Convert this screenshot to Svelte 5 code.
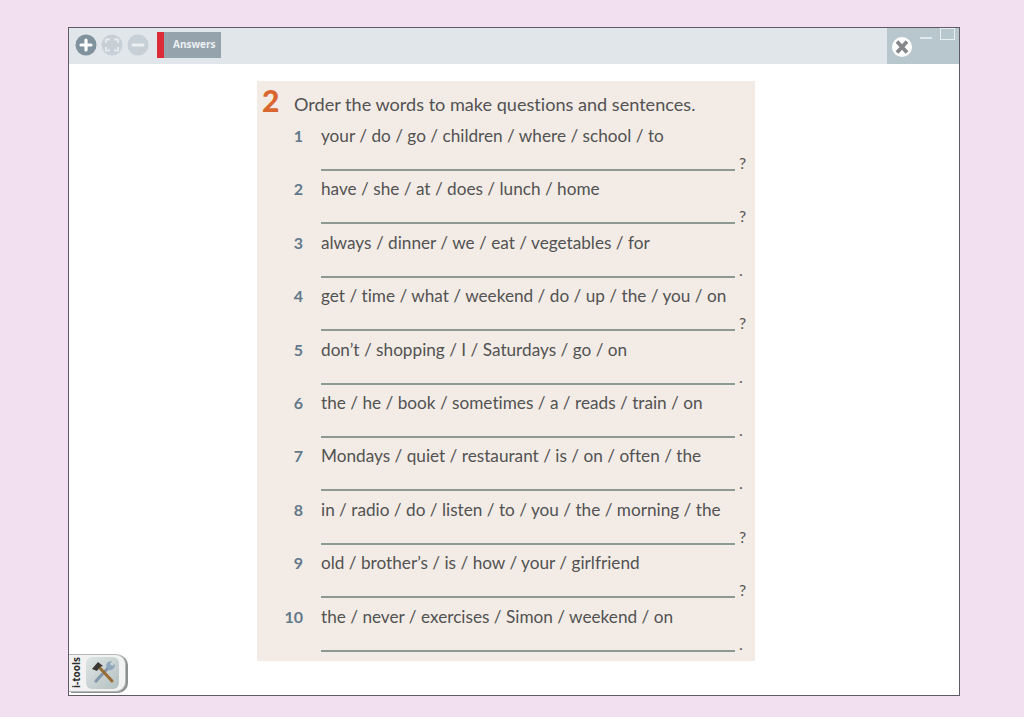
<script>
  const items = [
    { text: 'your / do / go / children / where / school / to', end: '?' },
    { text: 'have / she / at / does / lunch / home', end: '?' },
    { text: 'always / dinner / we / eat / vegetables / for', end: '.' },
    { text: 'get / time / what / weekend / do / up / the / you / on', end: '?' },
    { text: 'don’t / shopping / I / Saturdays / go / on', end: '.' },
    { text: 'the / he / book / sometimes / a / reads / train / on', end: '.' },
    { text: 'Mondays / quiet / restaurant / is / on / often / the', end: '.' },
    { text: 'in / radio / do / listen / to / you / the / morning / the', end: '?' },
    { text: 'old / brother’s / is / how / your / girlfriend', end: '?' },
    { text: 'the / never / exercises / Simon / weekend / on', end: '.' }
  ]
</script>

<div class="page">
  <div class="window">
    <div class="toolbar">
      <div class="tools">
        <svg viewBox="0 0 22 22" width="22" height="22">
          <circle cx="11" cy="11" r="10.5" fill="#7f929e" />
          <path d="M11 6v10M6 11h10" stroke="#fff" stroke-width="3.2" stroke-linecap="round" />
        </svg>
        <svg viewBox="0 0 22 22" width="22" height="22">
          <circle cx="11" cy="11" r="10.5" fill="#c6d0d6" />
          <path d="M5 9V5.500h4M13 5.500h4V9M17 13v3.500h-4M9 16.500H5V13" fill="none" stroke="#e6eaed" stroke-width="1.800" />
        </svg>
        <svg viewBox="0 0 22 22" width="22" height="22">
          <circle cx="11" cy="11" r="10.5" fill="#c6d0d6" />
          <path d="M6 11h10" stroke="#eef1f3" stroke-width="3" stroke-linecap="round" />
        </svg>
        <div class="answers">Answers</div>
      </div>
      <div class="controls">
        <svg class="close" viewBox="0 0 20 20" width="20" height="20">
          <circle cx="10" cy="10" r="10" fill="#fff" />
          <path d="M5 4.500l10 11M15 4.500l-10 11" stroke="#85888b" stroke-width="3.800" />
        </svg>
        <div class="minimize"></div>
        <div class="maximize"></div>
      </div>
    </div>

    <div class="content">
      <div class="card">
        <div class="heading">
          <span class="number">2</span>
          <span class="title">Order the words to make questions and sentences.</span>
        </div>
        <ol>
          {#each items as item, i}
            <li>
              <span class="idx">{i + 1}</span>
              <span class="text">{item.text}</span>
              <span class="line"></span>
              <span class="end">{item.end}</span>
            </li>
          {/each}
        </ol>
      </div>
    </div>

    <div class="itools">
      <span class="label">i-tools</span>
      <div class="tile">
        <svg viewBox="0 0 28 28" width="28" height="28">
          <path d="M20 8L7 22" stroke="#8398ab" stroke-width="3.200" stroke-linecap="round" />
          <path d="M18 9c-2-3 0-7 5-7l-2 3 2 2 3-2c0 5-4 7-7 6z" fill="#90a6ba" />
          <path d="M9 7l14 15" stroke="#9a6a34" stroke-width="3" stroke-linecap="round" />
          <path d="M3 10l6-7 5 4-3 1-3 4z" fill="#3b3733" />
        </svg>
      </div>
    </div>
  </div>
</div>

<style>
  :global(body) {
    margin: 0;
    background: #f2dff0;
  }

  .page {
    height: 717px;
    box-sizing: border-box;
    padding: 27px 64px 21px 68px;
    font-family: Lato, "Open Sans", sans-serif;
  }

  .window {
    position: relative;
    height: 100%;
    box-sizing: border-box;
    background: #fff;
    border: 1px solid #5f5a66;
    display: flex;
    flex-direction: column;
  }

  .toolbar {
    height: 36px;
    flex: none;
    background: #e1e6ea;
    display: flex;
    justify-content: space-between;
  }

  .tools {
    display: flex;
    align-items: center;
    gap: 4px;
    padding: 0 0 2px 6px;
  }

  .answers {
    margin-left: 4px;
    width: 48px;
    height: 26px;
    padding-left: 9px;
    background: #95a3ad;
    border-left: 7px solid #dc2b38;
    color: #eef1f3;
    font-family: "Open Sans", sans-serif;
    font-size: 10px;
    font-weight: 700;
    line-height: 25px;
  }

  .controls {
    position: relative;
    width: 72px;
    background: #b8c7ce;
  }

  .close {
    position: absolute;
    left: 5px;
    top: 9px;
  }

  .minimize {
    position: absolute;
    left: 33px;
    top: 9px;
    width: 12px;
    height: 2px;
    background: #dfe8ec;
  }

  .maximize {
    position: absolute;
    left: 53px;
    top: 0;
    width: 13px;
    height: 10px;
    border: 1px solid #e8eff2;
  }

  .content {
    flex: 1;
    padding: 17px 0 0 188px;
  }

  .card {
    width: 498px;
    height: 580px;
    box-sizing: border-box;
    background: #f3ece6;
    padding: 5px 0 0 5px;
    color: #525252;
  }

  .heading {
    display: flex;
    align-items: center;
    height: 35px;
    margin-bottom: 2px;
  }

  .number {
    width: 32px;
    color: #d9662f;
    font-size: 30px;
    font-weight: 900;
    line-height: 30px;
    margin-top: -7px;
  }

  .title {
    font-size: 18.100px;
    white-space: nowrap;
    font-variant-ligatures: none;
  }

  ol {
    list-style: none;
    margin: 0;
    padding: 0;
  }

  li {
    display: grid;
    grid-template-columns: 59px 414px 1fr;
    grid-template-rows: 26px 27.400px;
    font-size: 17.200px;
  }

  .idx {
    padding-right: 18px;
    text-align: right;
    color: #63798a;
    font-weight: 700;
    font-size: 16px;
    line-height: 26px;
  }

  .text {
    grid-column: 2 / 4;
    line-height: 26px;
    white-space: nowrap;
    font-variant-ligatures: none;
  }

  .line {
    grid-column: 2;
    height: 2px;
    margin-top: 20px;
    background: #8d9a94;
  }

  .end {
    grid-column: 3;
    padding-left: 4px;
    font-size: 16px;
    line-height: 12px;
    margin-top: 8px;
    color: #555;
  }

  .itools {
    position: absolute;
    left: 0;
    bottom: 3px;
    width: 57px;
    height: 38px;
    box-sizing: border-box;
    background: #f1f2f1;
    border: 1px solid #b4b8b8;
    border-left: 0;
    border-radius: 0 10px 10px 0;
    box-shadow: 2px 1px 0 #8c9090;
    display: flex;
    align-items: center;
  }

  .label {
    width: 15px;
    flex: none;
    writing-mode: vertical-rl;
    transform: rotate(180deg);
    font-family: "Open Sans", sans-serif;
    font-size: 10px;
    font-weight: 700;
    color: #2e2e2e;
    text-align: center;
  }

  .tile {
    width: 33px;
    height: 32px;
    margin-left: 2px;
    border-radius: 6px;
    background: linear-gradient(135deg, #dfe5e5, #b4c0c0);
    display: flex;
    align-items: center;
    justify-content: center;
  }
</style>
